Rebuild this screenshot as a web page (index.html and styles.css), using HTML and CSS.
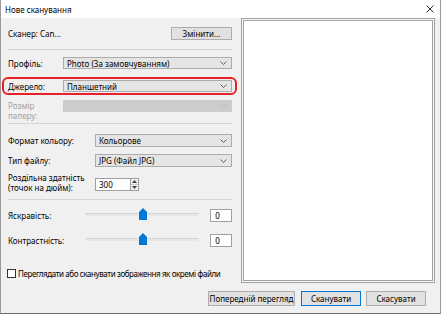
FILE: index.html
```html
<!DOCTYPE html>
<html lang="uk">
<head>
    <meta charset="UTF-8">
    <title>Нове сканування</title>
    <link rel="stylesheet" href="styles.css">
</head>
<body>
    <div class="window">
        <div class="titlebar">
            <span class="title">Нове сканування</span>
            <svg class="close" width="8" height="8" viewBox="0 0 8 8"><path d="M0.5 0.5L7.5 7.5M7.5 0.5L0.5 7.5" stroke="#333" stroke-width="1"/></svg>
        </div>

        <div class="content">
            <div class="main">
                <div class="settings">
                    <div class="row scanner-row">
                        <span>Сканер: Can...</span>
                        <button class="button change-button">Змінити...</button>
                    </div>

                    <div class="separator sep-1"></div>

                    <div class="row field profile-row">
                        <label>Профіль:</label>
                        <div class="combo">Photo (За замовчуванням)<svg class="arrow" width="7" height="4" viewBox="0 0 7 4"><path d="M0.5 0.5L3.5 3.5L6.5 0.5" stroke="#606060" fill="none"/></svg></div>
                    </div>

                    <div class="row field highlight">
                        <label>Джерело:</label>
                        <div class="combo">Планшетний<svg class="arrow" width="7" height="4" viewBox="0 0 7 4"><path d="M0.5 0.5L3.5 3.5L6.5 0.5" stroke="#606060" fill="none"/></svg></div>
                    </div>

                    <div class="row field paper-row disabled">
                        <label>Розмір<br>паперу:</label>
                        <div class="combo"><svg class="arrow" width="7" height="4" viewBox="0 0 7 4"><path d="M0.5 0.5L3.5 3.5L6.5 0.5" stroke="#b8b8b8" fill="none"/></svg></div>
                    </div>

                    <div class="separator sep-2"></div>

                    <div class="row field wide color-row">
                        <label>Формат кольору:</label>
                        <div class="combo">Кольорове<svg class="arrow" width="7" height="4" viewBox="0 0 7 4"><path d="M0.5 0.5L3.5 3.5L6.5 0.5" stroke="#606060" fill="none"/></svg></div>
                    </div>

                    <div class="row field wide type-row">
                        <label>Тип файлу:</label>
                        <div class="combo">JPG (Файл JPG)<svg class="arrow" width="7" height="4" viewBox="0 0 7 4"><path d="M0.5 0.5L3.5 3.5L6.5 0.5" stroke="#606060" fill="none"/></svg></div>
                    </div>

                    <div class="row field wide resolution-row">
                        <label>Роздільна здатність<br>(точок на дюйм):</label>
                        <div class="spinner">
                            <div class="spin-input">300</div>
                            <div class="spin-buttons">
                                <div class="spin-up"><svg width="5" height="3" viewBox="0 0 5 3"><path d="M2.5 0L5 3H0Z" fill="#404040"/></svg></div>
                                <div class="spin-down"><svg width="5" height="3" viewBox="0 0 5 3"><path d="M0 0H5L2.5 3Z" fill="#404040"/></svg></div>
                            </div>
                        </div>
                    </div>

                    <div class="separator sep-3"></div>

                    <div class="row slider-row brightness-row">
                        <label>Яскравість:</label>
                        <div class="slider">
                            <div class="track"></div>
                            <svg class="thumb" width="8" height="12" viewBox="0 0 8 12"><path d="M4 0L8 4V12H0V4Z" fill="#0078d7"/></svg>
                        </div>
                        <div class="value-box">0</div>
                    </div>

                    <div class="row slider-row contrast-row">
                        <label>Контрастність:</label>
                        <div class="slider">
                            <div class="track"></div>
                            <svg class="thumb" width="8" height="12" viewBox="0 0 8 12"><path d="M4 0L8 4V12H0V4Z" fill="#0078d7"/></svg>
                        </div>
                        <div class="value-box">0</div>
                    </div>

                    <div class="row check-row">
                        <span class="checkbox"></span>
                        <span class="check-label">Переглядати або сканувати зображення як окремі файли</span>
                    </div>
                </div>

                <div class="preview">
                    <div class="preview-inner"></div>
                </div>
            </div>

            <div class="buttons">
                <button class="button preview-button">Попередній перегляд</button>
                <button class="button scan-button">Сканувати</button>
                <button class="button cancel-button">Скасувати</button>
            </div>
        </div>
    </div>
</body>
</html>
```

FILE: styles.css
```css
body {
    margin: 0;
    font-family: "Noto Sans", "DejaVu Sans", sans-serif;
    font-size: 8px;
    color: #000;
    background-color: #fff;
}
.window {
    width: 441px;
    height: 314px;
    box-sizing: border-box;
    border: 1px solid #9a9a9a;
    border-top: none;
    border-bottom-color: #6e6e6e;
    background-color: #f0f0f0;
    display: flex;
    flex-direction: column;
}
.titlebar {
    height: 18px;
    background-color: #fff;
    display: flex;
    align-items: center;
    justify-content: space-between;
    padding: 0 5px 0 4px;
}
.title {
    font-size: 8px;
}
.close {
    margin-right: 1px;
}
.content {
    flex: 1;
    display: flex;
    flex-direction: column;
}
.main {
    display: flex;
    height: 265px;
}
.settings {
    width: 224px;
    padding: 0 9px 0 7px;
}
.row {
    display: flex;
    align-items: center;
}
.scanner-row {
    margin-top: 9px;
    height: 13px;
    justify-content: space-between;
}
.button {
    font-family: inherit;
    font-size: 8px;
    color: #000;
    background-color: #e1e1e1;
    border: 1px solid #adadad;
    padding: 0;
    margin: 0;
    box-sizing: border-box;
}
.change-button {
    width: 61px;
    height: 13px;
}
.separator {
    height: 1px;
    background-color: #d6d6d6;
}
.sep-1 {
    margin-top: 9px;
}
.sep-2 {
    margin-top: 3px;
}
.sep-3 {
    margin-top: 6px;
}
.field label {
    width: 55px;
    flex-shrink: 0;
}
.field.wide label {
    width: 87px;
}
.combo {
    flex: 1;
    height: 12px;
    box-sizing: border-box;
    border: 1px solid #acacac;
    background-color: #e5e5e5;
    display: flex;
    align-items: center;
    justify-content: space-between;
    padding: 0 4px 0 3px;
    white-space: nowrap;
}
.profile-row {
    margin-top: 7px;
}
.highlight {
    margin: 8px -5px 0 -6px;
    height: 18px;
    box-sizing: border-box;
    border: 2px solid #e8202a;
    border-radius: 6px;
    padding: 0 3px 0 4px;
}
.paper-row {
    margin-top: 5px;
    align-items: flex-start;
    height: 20px;
}
.paper-row label {
    line-height: 10px;
    padding-top: 1px;
}
.disabled label {
    color: #a0a0a0;
}
.disabled .combo {
    background-color: #cccccc;
    border-color: #cccccc;
    justify-content: flex-end;
}
.color-row {
    margin-top: 10px;
}
.color-row .combo,
.type-row .combo {
    height: 13px;
}
.type-row {
    margin-top: 7px;
}
.resolution-row {
    margin-top: 6px;
    height: 20px;
    align-items: flex-start;
}
.resolution-row label {
    line-height: 10px;
}
.spinner {
    display: flex;
    margin-top: 5px;
    height: 13px;
}
.spin-input {
    width: 35px;
    box-sizing: border-box;
    border: 1px solid #a0a0a0;
    border-right: none;
    background-color: #fff;
    padding-left: 3px;
    line-height: 11px;
}
.spin-buttons {
    width: 9px;
    box-sizing: border-box;
    border: 1px solid #a0a0a0;
    display: flex;
    flex-direction: column;
}
.spin-up,
.spin-down {
    flex: 1;
    display: flex;
    align-items: center;
    justify-content: center;
    background-color: #f0f0f0;
}
.spin-up {
    border-bottom: 1px solid #c8c8c8;
}
.slider-row {
    height: 14px;
}
.brightness-row {
    margin-top: 8px;
}
.contrast-row {
    margin-top: 11px;
}
.slider-row label {
    width: 77px;
    flex-shrink: 0;
}
.slider {
    position: relative;
    width: 116px;
    height: 14px;
}
.track {
    position: absolute;
    left: 0;
    right: 0;
    top: 5px;
    height: 3px;
    background-color: #e7e7e7;
    border-top: 1px solid #d6d6d6;
    box-sizing: border-box;
}
.thumb {
    position: absolute;
    left: 54px;
    top: 0;
}
.value-box {
    margin-left: 11px;
    width: 22px;
    height: 13px;
    box-sizing: border-box;
    border: 1px solid #a0a0a0;
    background-color: #fff;
    padding-left: 4px;
    line-height: 11px;
}
.check-row {
    margin-top: 21px;
    height: 10px;
    margin-left: -1px;
    white-space: nowrap;
}
.check-label {
    letter-spacing: -0.4px;
}
.checkbox {
    flex-shrink: 0;
    width: 9px;
    height: 9px;
    box-sizing: border-box;
    border: 1px solid #333;
    background-color: #fff;
    margin-right: 2px;
}
.preview {
    width: 194px;
    height: 265px;
    box-sizing: border-box;
    border: 1px solid #a0a0a0;
    padding: 1px;
    background-color: #fafafa;
}
.preview-inner {
    height: 100%;
    box-sizing: border-box;
    border: 1px solid #a0a0a0;
    background-color: #fff;
}
.buttons {
    display: flex;
    justify-content: flex-end;
    margin-top: 8px;
    padding-right: 14px;
    gap: 5px;
}
.buttons .button {
    height: 15px;
    width: 60px;
}
.buttons .preview-button {
    width: 87px;
    margin-right: 1px;
}
.scan-button {
    border-color: #0078d7;
}
```
